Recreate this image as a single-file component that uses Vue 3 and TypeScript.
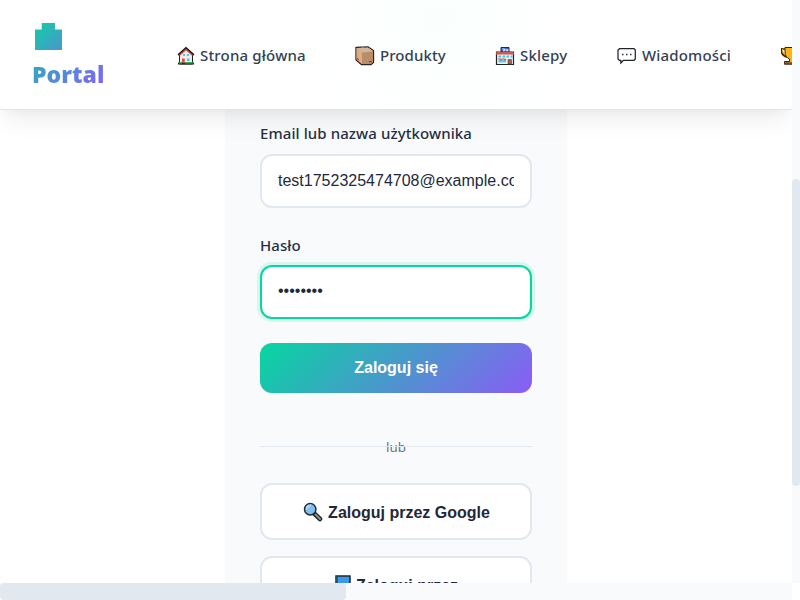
<script setup lang="ts">
import { ref } from 'vue'

interface NavItem {
  icon: string
  label: string
  cls: string
}

const navItems: NavItem[] = [
  { icon: 'house', label: 'Strona główna', cls: 'home' },
  { icon: 'box', label: 'Produkty', cls: 'products' },
  { icon: 'shop', label: 'Sklepy', cls: 'shops' },
  { icon: 'chat', label: 'Wiadomości', cls: 'messages' },
  { icon: 'cup', label: '', cls: 'ranking' },
]

const email = ref('test1752325474708@example.com')
const password = ref('••••••••')
</script>

<template>
  <div class="window">
    <div class="page">
      <header class="navbar">
        <a class="brand">
          <svg class="brand-mark" width="27" height="27" viewBox="0 0 27 27">
            <defs>
              <linearGradient id="mark" gradientUnits="userSpaceOnUse" x1="-5" y1="-3" x2="54" y2="56">
                <stop offset="0" stop-color="#06d6a0" />
                <stop offset="1" stop-color="#8b5cf6" />
              </linearGradient>
            </defs>
            <path d="M6.7 0H20V6.5H27V27H0V6.5H6.7Z" fill="url(#mark)" />
          </svg>
          <span class="brand-name">Portal</span>
        </a>
        <nav class="links">
          <a v-for="item in navItems" :key="item.icon" class="link" :class="item.cls">
            <svg v-if="item.icon === 'house'" class="icon" width="18" height="20" viewBox="0 0 18 20">
              <path d="M2.5 8.5L9 3L15.5 8.5V18H2.5Z" fill="#eeecee" stroke="#222" stroke-width="1" />
              <path d="M1.2 9L9 2L16.8 9" fill="none" stroke="#171717" stroke-width="2" />
              <path d="M2.5 9.3L9 3.4L15.5 9.3" fill="none" stroke="#d04d3a" stroke-width="1.3" />
              <path d="M6 8h2v2H6zM10 8h2v2H10zM10 12.5h2.5v2.5H10z" fill="#48c8f3" />
              <path d="M5 12.5h2.7v4H5z" fill="#ee4931" />
              <path d="M1 16.5H17V18.5H1Z" fill="#242b24" />
              <path d="M2 16.8H5M8 16.8H16" stroke="#25b93b" stroke-width="1.2" />
            </svg>
            <svg v-else-if="item.icon === 'box'" class="icon" width="20" height="20" viewBox="0 0 20 20">
              <path d="M1 1.5L13 1L18.5 4.5V16.5L16 18.5H6.5L1 14Z" fill="#d5a27c" stroke="#292424" stroke-width="1.3" />
              <path d="M1.5 2L7 6.5V18L1.5 13.5Z" fill="#dcae88" />
              <path d="M7 6.5L18 5.5V16.3L15.8 18H7Z" fill="#b98d69" />
              <path d="M1.5 2L7 6.5L18 5.1L13 1.6Z" fill="#dfb28d" />
              <path d="M6 1.5L12 6L14 5.6L8.5 1.4Z" fill="#b9bdbd" />
              <path d="M2 11.5l2 1.5v2L2 13.2z" fill="#ec3550" />
              <path d="M14 15h3v1.3h-3z" fill="#705344" />
            </svg>
            <svg v-else-if="item.icon === 'shop'" class="icon" width="20" height="20" viewBox="0 0 20 20">
              <path d="M6 1.5H14V7H6Z" fill="#3f69ed" stroke="#252a30" />
              <path d="M7.5 3h2v1.5h-1v1h1M11 3v1.7h1.7M12.8 3v3" fill="none" stroke="#fff" stroke-width=".9" />
              <path d="M1.5 6H18.5V18.5H1.5Z" fill="#f0f1f4" stroke="#202428" stroke-width="1.2" />
              <path d="M1 6.4H19V8.5H1Z" fill="#e54c38" />
              <path d="M3.5 9.5H6V11.5H3.5ZM7.5 9.5H10V11.5H7.5ZM11.5 9.5H14V11.5H11.5ZM15.5 9.5H17.5V11.5H15.5Z" fill="#38c7ed" />
              <path d="M3.5 14H11V16.5H3.5Z" fill="#54cfed" />
              <path d="M3 13h2l1 1 1-1h2l1 1 1-1" fill="none" stroke="#e65138" stroke-width="1.2" />
              <path d="M13 13.5H16.5V18H13Z" fill="#9b6450" stroke="#5c4137" stroke-width=".6" />
            </svg>
            <svg v-else-if="item.icon === 'chat'" class="icon" width="20" height="20" viewBox="0 0 20 20">
              <path d="M2.5 2.7H17L18.3 4V13L17 14.3H6.5L3.8 17V14.3H2.3L1 13V4Z" fill="#fff" stroke="#20252b" stroke-width="1.25" />
              <path d="M5 8.5h1.5M9 8.5h1.5M13 8.5h1.5" stroke="#333" stroke-width="1.4" />
            </svg>
            <svg v-else class="icon" width="20" height="20" viewBox="0 0 20 20">
              <path d="M4 3H1V6Q1 9 6 11M16 3H19V6Q19 9 14 11" fill="none" stroke="#302616" stroke-width="2.2" />
              <path d="M4 3H1.5V6Q2 8.5 6 10M16 3H18.5V6Q18 8.5 14 10" fill="none" stroke="#f5ac0b" stroke-width="1" />
              <path d="M4 1.5H16V6Q16 11 11.5 13V15.5H15V18.2H3.5V15.5H8.5V13Q4 11 4 6Z" fill="#fbb510" stroke="#302616" />
              <path d="M3.5 16.3H15V18.2H3.5Z" fill="#6f4536" />
            </svg>
            <span class="link-text">{{ item.label }}</span>
          </a>
        </nav>
      </header>

      <main class="content">
        <form class="card" @submit.prevent>
          <label class="label label-email" for="email">Email lub nazwa użytkownika</label>
          <input id="email" v-model="email" class="field" type="text" />
          <label class="label label-password" for="password">Hasło</label>
          <input id="password" v-model="password" class="field focused" type="text" />
          <button class="submit" type="submit">Zaloguj się</button>
          <div class="divider"><span class="divider-text">lub</span></div>
          <button class="social" type="button">
            <svg width="20" height="20" viewBox="0 0 20 20">
              <path d="M11.2 11.5L17 17" stroke="#1c2324" stroke-width="4.5" stroke-linecap="round" />
              <path d="M12.5 12.5L17 17" stroke="#84918f" stroke-width="2" stroke-linecap="round" />
              <circle cx="7.2" cy="7.2" r="5.7" fill="#82c0f3" stroke="#252d32" stroke-width="1.5" />
              <path d="M3 8L8.5 2.5Q4.5 2 3 5Z" fill="#b8ddf8" />
            </svg>
            <span class="social-text">Zaloguj przez Google</span>
          </button>
          <button class="social social-facebook" type="button">
            <svg width="16" height="20" viewBox="0 0 16 20">
              <path d="M1 1H15V18H1Z" fill="#3c98e4" stroke="#1d2833" stroke-width="1.5" />
              <path d="M2 1V18" stroke="#1b526f" stroke-width="1.5" />
            </svg>
            <span class="social-text">Zaloguj przez</span>
          </button>
        </form>
      </main>
    </div>
    <div class="track-y"><div class="thumb-y"></div></div>
    <div class="track-x"><div class="thumb-x"></div></div>
  </div>
</template>

<style>
body { margin: 0; background: #fff; overflow: hidden; }
</style>

<style scoped>
* { box-sizing: border-box; }
.window {
  display: grid;
  grid-template: 583px 17px / 792px 8px;
  width: 800px;
  height: 600px;
  overflow: hidden;
  color: #1e293b;
  font-family: "Noto Sans", "Open Sans", sans-serif;
}
.page { display: flex; flex-direction: column; overflow: hidden; background: #fff; }
.navbar {
  position: relative;
  z-index: 1;
  flex: none;
  display: flex;
  height: 110px;
  border-bottom: 1px solid #e3e5e7;
  background: radial-gradient(circle at 440px 20px, #fafffe 0, #fff 130px);
  box-shadow: 0 10px 25px -5px rgba(0, 0, 0, .1), 0 4px 10px -5px rgba(0, 0, 0, .04);
}
.brand { flex: none; display: flex; flex-direction: column; width: 177px; padding: 23px 0 0 33px; }
.brand-mark { margin-left: 2px; }
.brand-name {
  align-self: flex-start;
  margin: 7px 0 0 -1px;
  color: transparent;
  background: linear-gradient(135deg, #2cacbc, #5789db 48%, #8b5cf6);
  background-clip: text;
  font-size: 23px;
  font-weight: 900;
  line-height: 34px;
}
.links { display: flex; width: 615px; padding-top: 42px; overflow: hidden; }
.link {
  flex: none;
  display: flex;
  height: 27px;
  align-items: center;
  gap: 5px;
  white-space: nowrap;
  font-size: 15px;
  font-weight: 500;
  line-height: 25px;
  letter-spacing: .18px;
  color: #334155;
}
.link-text { padding: 1px 0; }
.home { width: 178px; }
.products { width: 140px; letter-spacing: .08px; }
.shops { width: 122px; }
.messages { width: 164px; }
.content { display: flex; justify-content: center; }
.card {
  display: flex;
  flex-direction: column;
  width: 340px;
  height: 650px;
  padding: 10px 33px 32px;
  border: 1px solid #f7f9fb;
  background: #f8fafc;
  box-shadow: 0 0 4px rgba(0, 0, 0, .035);
}
.label { display: block; height: 24px; font-size: 15px; line-height: 24px; font-weight: 500; letter-spacing: .09px; color: #253044; }
.label-email { height: 25px; }
.label-password { margin-top: 25px; }
.field {
  display: block;
  width: 272px;
  height: 54px;
  margin: 8px 0 0;
  padding: 0 16px;
  border: 2px solid #e2e8f0;
  border-radius: 12px;
  outline: none;
  background: #fff;
  color: #1e293b;
  font-family: "Liberation Sans", sans-serif;
  font-size: 16px;
}
.focused { padding-bottom: 2px; border-color: #06d6a0; box-shadow: 0 0 0 3px rgba(6, 214, 160, .13); }
.submit {
  flex: none;
  height: 50px;
  margin: 24px 0 0;
  padding: 0;
  border: 0;
  border-radius: 12px;
  background: linear-gradient(135deg, #06d6a0, #8b5cf6);
  color: #fff;
  font: 700 16px "Liberation Sans", sans-serif;
}
.divider {
  display: grid;
  height: 24px;
  margin-top: 43px;
  text-align: center;
  font-size: 13.3px;
  line-height: 23px;
  color: #64748b;
}
.divider-text { grid-area: 1 / 1; }
.divider::after {
  grid-area: 1 / 1;
  height: 1px;
  margin-top: 10px;
  background: #e2e8f0;
  content: "";
}
.social {
  flex: none;
  display: flex;
  align-items: center;
  justify-content: center;
  gap: 5px;
  height: 57px;
  margin: 23px 0 0;
  padding: 1px 0 0 1px;
  border: 2px solid #e2e8f0;
  border-radius: 12px;
  background: #fff;
  color: #1e293b;
  font: 700 16px "Liberation Sans", sans-serif;
}
.social-text { padding-top: 2px; }
.social-facebook { margin-top: 16px; }
.track-y { background: #f8fafc; }
.thumb-y { height: 307px; margin-top: 179px; border-radius: 4px; background: #e2e8f0; }
.track-x { background: #f8fafc; }
.thumb-x { width: 346px; height: 17px; border-radius: 4px; background: #e2e8f0; }
</style>
